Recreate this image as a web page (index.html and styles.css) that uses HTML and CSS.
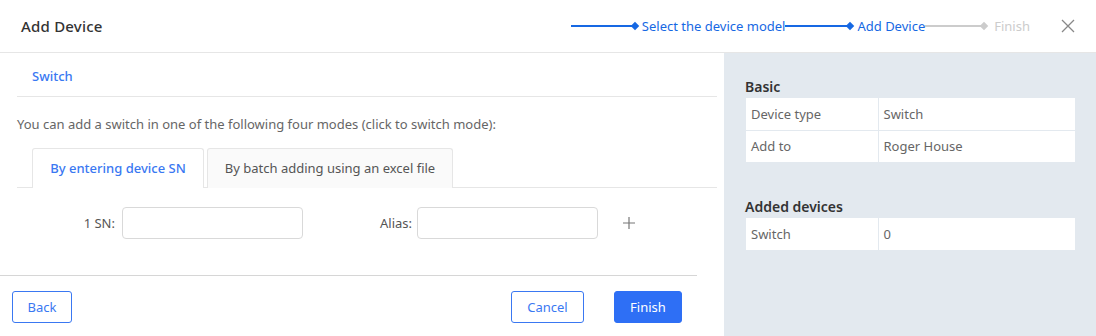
FILE: index.html
```html
<!DOCTYPE html>
<html>
<head>
<meta charset="utf-8">
<link rel="stylesheet" href="styles.css">
</head>
<body>
<div class="dialog">
  <header class="head">
    <div class="title">Add Device</div>
    <div class="steps">
      <span class="line done"></span><span class="dot done"></span><span class="step done">Select the device model</span>
      <span class="line done l2"></span><span class="dot done"></span><span class="step done s2">Add Device</span>
      <span class="line todo"></span><span class="dot todo"></span><span class="step todo s3">Finish</span>
    </div>
    <svg class="close" width="14" height="14" viewBox="0 0 14 14"><path d="M1 1L13 13M13 1L1 13" stroke="#888" stroke-width="1.3" fill="none"/></svg>
  </header>
  <div class="body">
    <main class="main">
      <div class="inner">
        <div class="sec-title">Switch</div>
        <p class="desc">You can add a switch in one of the following four modes (click to switch mode):</p>
        <div class="tabs">
          <div class="tab active t1">By entering device SN</div>
          <div class="tab t2">By batch adding using an excel file</div>
        </div>
        <div class="form-row">
          <label class="lbl lbl-sn">1 SN:</label>
          <span class="input"></span>
          <label class="lbl lbl-alias">Alias:</label>
          <span class="input"></span>
          <svg class="plus" width="12" height="12" viewBox="0 0 12 12"><path d="M6 0V12M0 6H12" stroke="#777" stroke-width="1.2"/></svg>
        </div>
      </div>
      <footer class="foot">
        <button class="btn outline back">Back</button>
        <span class="spacer"></span>
        <button class="btn outline cancel">Cancel</button>
        <button class="btn primary">Finish</button>
      </footer>
    </main>
    <aside class="side">
      <h3 class="side-h">Basic</h3>
      <table class="info">
        <tr><td>Device type</td><td>Switch</td></tr>
        <tr><td>Add to</td><td>Roger House</td></tr>
      </table>
      <h3 class="side-h h2">Added devices</h3>
      <table class="info">
        <tr><td>Switch</td><td>0</td></tr>
      </table>
    </aside>
  </div>
</div>
</body>
</html>
```
FILE: styles.css
```css
* { box-sizing: border-box; }
html, body { margin: 0; padding: 0; background: #fff; }
body { font-family: "Noto Sans", "Open Sans", sans-serif; color: #333; width: 1096px; height: 336px; overflow: hidden; }
.dialog { display: flex; flex-direction: column; height: 336px; }
.head { height: 53px; border-bottom: 1px solid #e6e6e6; display: flex; align-items: center; padding: 0 21px; }
.title { font-size: 15px; font-weight: 500; color: #333; flex: 1; letter-spacing: 0.2px; }
.steps { display: flex; align-items: center; font-size: 13px; margin-right: 31px; }
.line { display: block; height: 2px; width: 63px; }
.line.done { background: #1668e3; }
.line.l2 { width: 64px; }
.line.todo { background: #ccc; width: 58px; }
.dot { width: 6px; height: 6px; transform: rotate(45deg); display: block; margin-left: -2px; }
.dot.done { background: #1668e3; }
.dot.todo { background: #ccc; }
.step { margin-left: 4px; }
.step.done { color: #1668e3; }
.step.s2 { margin-left: 4px; }
.step.todo { color: #ccc; }
.step.s3 { margin-left: 7px; }
.close { display: block; }
.body { flex: 1; display: flex; }
.main { width: 724px; flex: none; display: flex; flex-direction: column; }
.inner { padding: 0 7px 0 17px; flex: 1; }
.sec-title { height: 44px; border-bottom: 1px solid #e6e6e6; padding: 14px 0 0 15px; font-size: 13px; font-weight: 500; color: #3a78f2; }
.desc { margin: 0; padding-top: 18px; height: 51px; font-size: 13px; color: #666; }
.tabs { display: flex; padding-left: 15px; border-bottom: 1px solid #e6e6e6; height: 40px; }
.tab { height: 40px; border: 1px solid #e6e6e6; border-bottom: none; border-radius: 3px 3px 0 0; padding-top: 10px; text-align: center; font-size: 13px; color: #555; background: #fafafa; margin-right: 3px; }
.tab.t1 { width: 172px; }
.tab.t2 { width: 246px; }
.tab.active { color: #3a78f2; background: #fff; font-weight: 500; }
.form-row { display: flex; align-items: center; margin-top: 19px; height: 32px; }
.lbl { font-size: 13px; color: #555; text-align: right; }
.lbl-sn { width: 105px; padding-right: 7px; }
.lbl-alias { width: 114px; padding-right: 5px; }
.input { display: block; width: 181px; height: 32px; border: 1px solid #d9d9d9; border-radius: 4px; background: #fff; }
.plus { margin-left: 25px; }
.foot { border-top: 1px solid #d6d6d6; width: 697px; height: 61px; display: flex; align-items: flex-start; padding: 15px 15px 0 12px; }
.spacer { flex: 1; }
.btn { font-family: inherit; font-size: 13px; height: 32px; border-radius: 3px; padding: 0; cursor: pointer; }
.btn.outline { border: 1px solid #3a78f2; color: #3a78f2; background: #fff; }
.btn.back { width: 60px; }
.btn.cancel { width: 73px; }
.btn.primary { background: #2e6ff5; border: 1px solid #2e6ff5; color: #fff; width: 68px; margin-left: 30px; }
.side { flex: 1; background: #e3e9ef; padding: 24px 22px 0 21px; }
.side-h { margin: 0 0 1px; font-size: 14px; font-weight: 600; color: #333; height: 20px; }
.side-h.h2 { margin-top: 35px; }
.info { border-collapse: collapse; width: 329px; background: #fff; font-size: 13px; color: #666; margin-left: 1px; }
.info td { height: 32px; padding: 0 5px; border: 1px solid #e3e9ef; border-top: none; border-left: none; border-right: none; }
.info td:first-child { width: 132px; border-right: 1px solid #e3e9ef; }
.info tr:last-child td { border-bottom: none; }
```
